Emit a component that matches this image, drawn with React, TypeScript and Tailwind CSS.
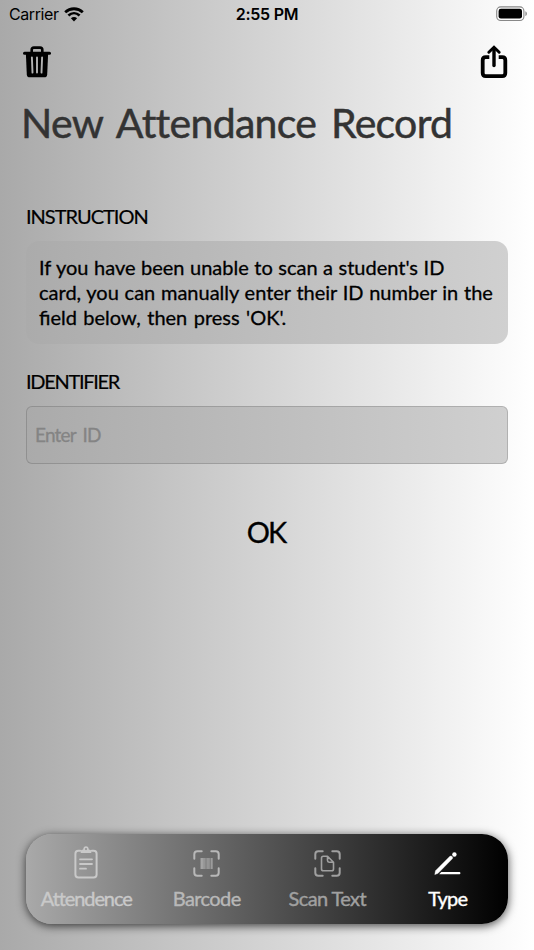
import React from 'react';

function Wifi() {
  return (
    <svg className="ml-[5px] h-[15px] w-5" viewBox="0 0 20 15" fill="none" stroke="#000">
      <path d="M1.2 5.2 C6.2 .6 13.8 .6 18.8 5.2" strokeWidth="2.8" />
      <path d="M4.4 8.5 C7.7 5.4 12.3 5.4 15.6 8.5" strokeWidth="2.6" />
      <path d="M10 14.4 L6.9 11.2 C8.6 9.6 11.4 9.6 13.1 11.2 Z" fill="#000" stroke="none" />
    </svg>
  );
}

function Battery() {
  return (
    <svg className="h-4 w-8" viewBox="0 0 32 16">
      <rect x=".7" y=".9" width="27.2" height="13.6" rx="4" fill="none" stroke="#888" strokeWidth="1.1" />
      <rect x="2.6" y="2.8" width="23.4" height="9.8" rx="2.3" />
      <path d="M29.4 5.3 C31.4 6.1 31.4 9.3 29.4 10.1Z" fill="#888" />
    </svg>
  );
}

function Trash() {
  return (
    <svg className="mt-px h-8 w-7" viewBox="0 0 28 32">
      <path d="M8.7 6.5 V3.8 Q8.7 1.6 10.9 1.6 H17.1 Q19.3 1.6 19.3 3.8 V6.5" fill="none" stroke="#000" strokeWidth="2.6" />
      <path d="M1.5 7.3H26.5" stroke="#000" strokeWidth="3" strokeLinecap="round" />
      <path d="M2.9 8 H25.1 L24.2 28.4 Q24 31.3 21.2 31.3 H6.8 Q4 31.3 3.8 28.4Z" />
      <path d="M8.9 11.4 L9.5 26.6 M14 11.4V26.6 M19.1 11.4 L18.5 26.6" stroke="#b2b2b2" strokeWidth="1.9" strokeLinecap="round" />
    </svg>
  );
}

function Share() {
  return (
    <svg className="h-[34px] w-7" viewBox="0 0 28 34" fill="none" stroke="#000">
      <path d="M9.3 12.1 H5.8 Q2.7 12.1 2.7 15.2 V28 Q2.7 31.1 5.8 31.1 H22.2 Q25.3 31.1 25.3 28 V15.2 Q25.3 12.1 22.2 12.1 H18.7" strokeWidth="3.8" />
      <path d="M14 20.5V3.5" strokeWidth="3.4" strokeLinecap="round" />
      <path d="M8.8 7.3 L14 2.2 L19.2 7.3" strokeWidth="2.9" strokeLinecap="round" strokeLinejoin="miter" />
    </svg>
  );
}

const corners = 'M1.3 8.7V4.3Q1.3 1.3 4.3 1.3H8.7 M18.3 1.3H22.7Q25.7 1.3 25.7 4.3V8.7 M25.7 18.3V22.7Q25.7 25.7 22.7 25.7H18.3 M8.7 25.7H4.3Q1.3 25.7 1.3 22.7V18.3';

function Clipboard() {
  return (
    <svg className="h-[33px] w-6" viewBox="0 0 24 33" fill="none" stroke="currentColor" strokeLinecap="round">
      <path d="M6.2 4.8H4.4Q1.4 4.8 1.4 7.8V28.4Q1.4 31.4 4.4 31.4H19.6Q22.6 31.4 22.6 28.4V7.8Q22.6 4.8 19.6 4.8H17.8" strokeWidth="2" />
      <path d="M6.7 7V5.3Q6.7 3.4 9.2 3.4Q9.5 .3 12 .3T14.8 3.4Q17.3 3.4 17.3 5.3V7Z M12 2A1.1 1.1 0 1 0 12 4.2A1.1 1.1 0 1 0 12 2" fill="currentColor" fillRule="evenodd" stroke="none" />
      <path d="M6 13.3H18M6 18H18M6 22.7H12" strokeWidth="1.8" />
    </svg>
  );
}

function Barcode() {
  return (
    <svg className="mt-[2px] size-[27px]" viewBox="0 0 27 27" fill="none" stroke="currentColor">
      <path d={corners} strokeWidth="2" strokeLinecap="round" />
      <path d="M8.2 8V19M11 8V19M15 8V19M18.9 8V19" strokeWidth="1.1" />
      <path d="M9.6 8V19M13 8V19M16.9 8V19" strokeWidth=".8" />
    </svg>
  );
}

function ScanDocument() {
  return (
    <svg className="mt-[2px] size-[27px]" viewBox="0 0 27 27" fill="none" stroke="currentColor">
      <path d={corners} strokeWidth="2" strokeLinecap="round" />
      <path d="M13.5 6.2H9.3Q7.5 6.2 7.5 8V19Q7.5 20.8 9.3 20.8H17.7Q19.5 20.8 19.5 19V12.2ZM13.5 6.2V10.6Q13.5 12.2 15.1 12.2H19.5" strokeWidth="1.6" strokeLinejoin="round" />
    </svg>
  );
}

function Pencil() {
  return (
    <svg className="mt-[2px] h-6 w-[27px]" viewBox="0 0 27 24" fill="currentColor">
      <path d="M.8 22.6 L1.5 18.7 L15.9 4.3 Q17 3.5 18.2 4.6 Q19.2 5.8 18.3 6.8 L4.1 21.3Z" stroke="currentColor" strokeWidth=".4" strokeLinejoin="round" />
      <circle cx="20.4" cy="2.5" r="2.2" />
      <path d="M7.3 20.1H25.5Q26.4 20.1 26.4 21.2T25.5 22.3H5.2Z" />
    </svg>
  );
}

const tabs = [
  { label: 'Attendence', icon: <Clipboard />, color: 'text-[#c9c9c9]', tracking: 'tracking-[-1.1px]' },
  { label: 'Barcode', icon: <Barcode />, color: 'text-[#b8b8b8]', tracking: 'tracking-[-0.6px]' },
  { label: 'Scan Text', icon: <ScanDocument />, color: 'text-[#a0a0a0]', tracking: 'tracking-[-0.6px]' },
  { label: 'Type', icon: <Pencil />, color: 'text-white', tracking: 'tracking-[-0.8px]' },
];

export default function App() {
  return (
    <div className="flex h-[950px] w-[534px] flex-col overflow-hidden bg-[linear-gradient(90deg,#a9a9a9,#fff)] font-['Lato',sans-serif] text-black">
      <div className="grid h-7 shrink-0 grid-cols-3 items-center pr-[6px] pl-[9px] font-['Inter',sans-serif]">
        <div className="flex items-center text-[16px] tracking-[-0.4px]">Carrier<Wifi /></div>
        <div className="pr-[3px] text-center text-[16px] font-semibold tracking-[-0.25px]">2:55 PM</div>
        <div className="flex justify-end"><Battery /></div>
      </div>
      <header className="flex h-[68px] shrink-0 items-start justify-between pt-[17px] pr-[26px] pl-[23px]">
        <button aria-label="Delete"><Trash /></button>
        <button aria-label="Share"><Share /></button>
      </header>
      <h1 className="h-[53px] shrink-0 pl-[21px] text-[41px] leading-[54px] tracking-[-0.7px] whitespace-nowrap text-[#333] [-webkit-text-stroke:0.5px] [word-spacing:5px]">New Attendance Record</h1>
      <main className="flex flex-col px-[26px] pt-[54px]">
        <h2 className="h-[26px] text-[20px] leading-[26px] tracking-[-1px] [-webkit-text-stroke:0.2px]">INSTRUCTION</h2>
        <div className="mt-[12px] h-[103px] rounded-[13px] bg-[linear-gradient(90deg,#ababab,#d0d0d0)] pt-[14px] pl-[13px] text-[20px] leading-[25px] whitespace-nowrap [-webkit-text-stroke:0.3px]">
          <p className="[word-spacing:0.4px]">If you have been unable to scan a student's ID</p>
          <p className="[word-spacing:0.6px]">card, you can manually enter their ID number in the</p>
          <p className="[word-spacing:1.3px]">field below, then press 'OK'.</p>
        </div>
        <h2 className="mt-[25px] h-[25px] text-[20px] leading-[25px] tracking-[-1.3px] [-webkit-text-stroke:0.2px]">IDENTIFIER</h2>
        <input className="mt-[12px] h-[58px] rounded-[6px] border border-black/15 bg-[linear-gradient(90deg,#aaa,#d0d0d0)] bg-origin-border px-2 pb-px text-[19px] tracking-[-0.8px] outline-none [-webkit-text-stroke:0.3px] [word-spacing:3px] placeholder:text-[#848484]" placeholder="Enter ID" />
        <button className="mt-[48px] mr-[2px] h-10 self-center text-[29px] leading-10 tracking-[-2px] [-webkit-text-stroke:0.3px]">OK</button>
      </main>
      <nav className="mx-[26px] mt-auto mb-[26px] grid h-[90px] shrink-0 grid-cols-4 rounded-[26px] bg-[linear-gradient(90deg,#a9a9a9,#000)] shadow-[0_2px_10px_rgba(0,0,0,0.7)]">
        {tabs.map((tab) => (
          <button key={tab.label} className={`flex flex-col items-center ${tab.color}`}>
            <span className="flex h-[51px] items-center pt-[6px]">{tab.icon}</span>
            <span className={`text-[20px] leading-[26px] whitespace-nowrap [-webkit-text-stroke:0.4px] ${tab.tracking}`}>{tab.label}</span>
          </button>
        ))}
      </nav>
    </div>
  );
}
